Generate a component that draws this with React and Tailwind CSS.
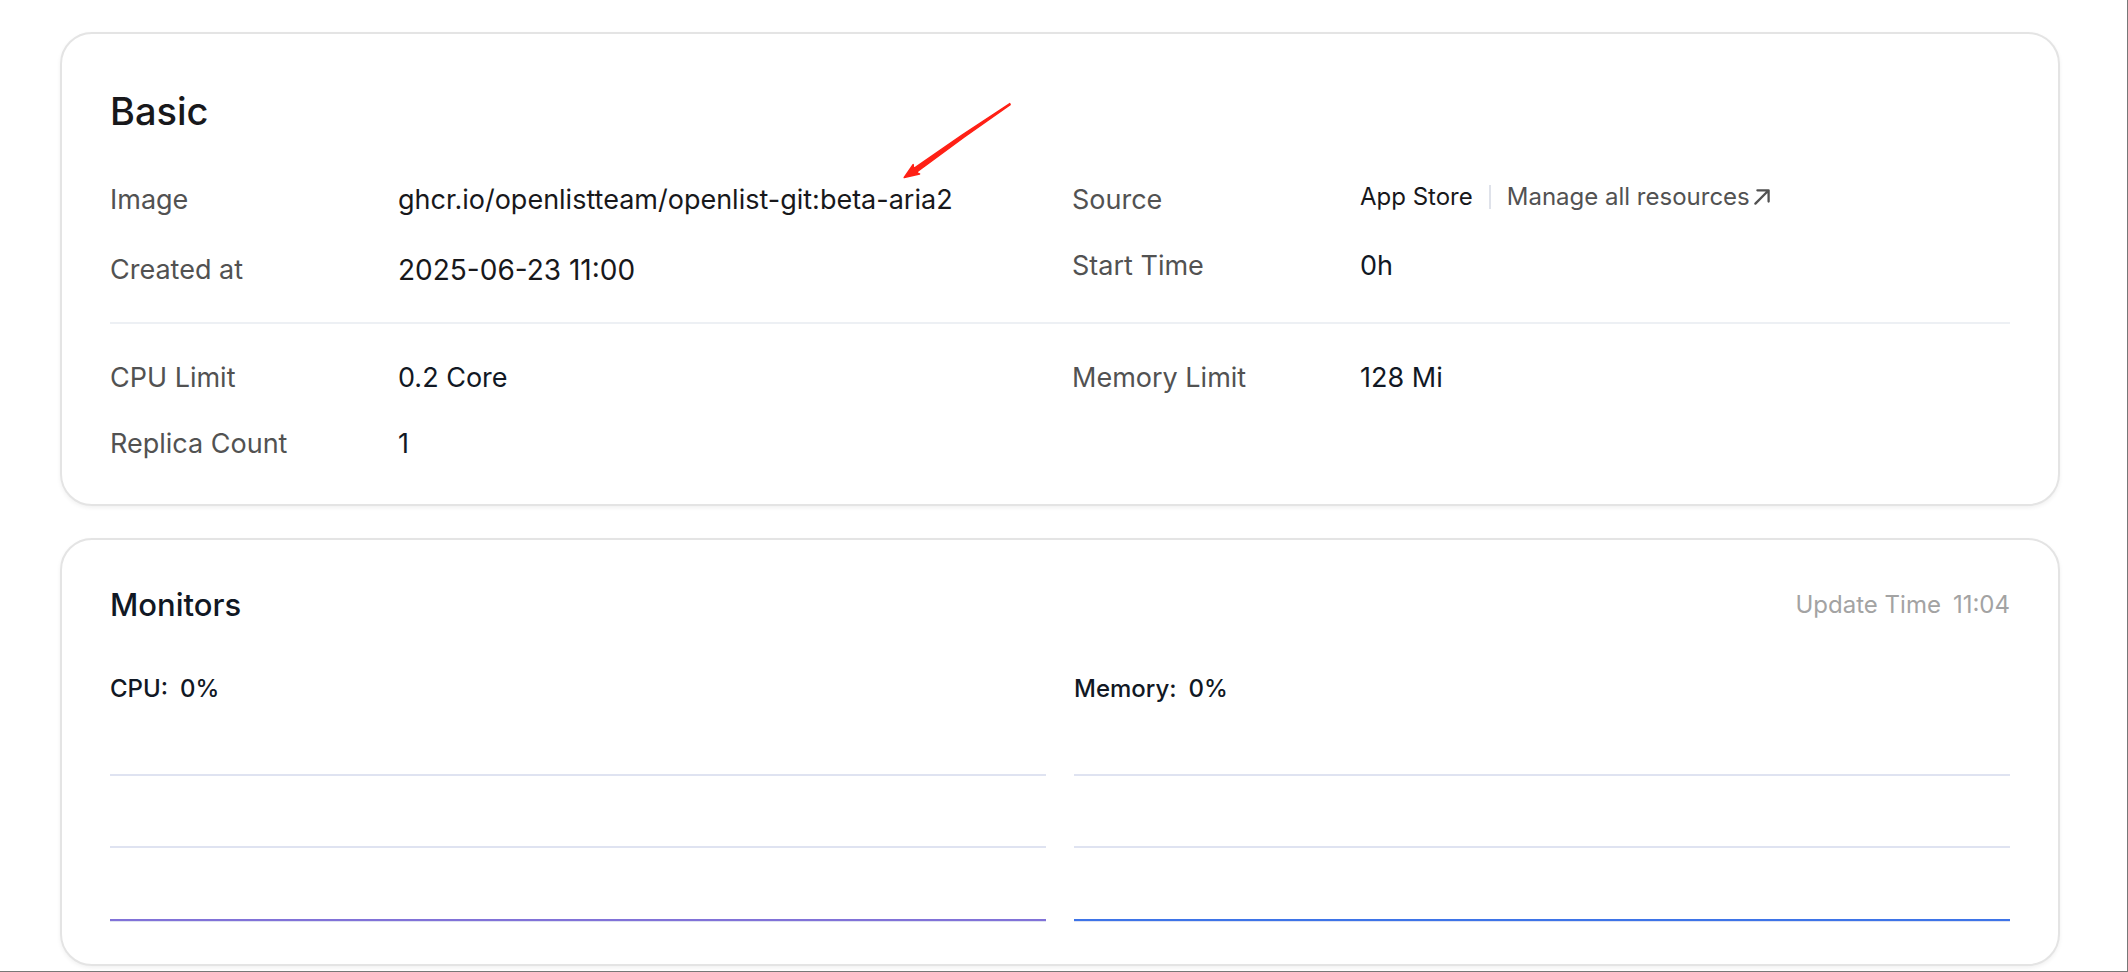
function Row({ label, children, dark }) {
  return (
    <div className="flex items-start">
      <dt className="w-72 shrink-0 text-[#525252]">{label}</dt>
      <dd className={dark ? "text-[#111824]" : "text-[#18181b]"}>{children}</dd>
    </div>
  );
}

function Card({ className, children }) {
  return (
    <section
      className={`rounded-[32px] border-2 border-[#e4e4e4] bg-white px-12 shadow-[0_2px_4px_rgba(0,0,0,0.06)] ${className}`}
    >
      {children}
    </section>
  );
}

function Pointer() {
  return (
    <svg
      className="pointer-events-none absolute -top-[79px] left-[502px]"
      width="114"
      height="82"
      viewBox="0 0 114 82"
      aria-hidden="true"
    >
      <path
        d="M4.2 77.5 L13.2 64.5 L13.6 68.2 L15.4 67.4 L62 35 L109.8 3.6 L110.2 4.8 L64 37.2 L17.8 71.2 L17.2 73.2 L19.6 74 Z"
        fill="#ff2015"
        stroke="#ff2015"
        strokeWidth="1.4"
        strokeLinejoin="round"
      />
    </svg>
  );
}

function ExternalArrow() {
  return (
    <svg width="16" height="16" viewBox="0 0 16 16" fill="none" aria-hidden="true">
      <path
        d="M3.4 1.3H14.6V12.6M14.4 1.5L1.4 14.6"
        stroke="currentColor"
        strokeWidth="2.3"
        strokeLinecap="round"
        strokeLinejoin="round"
      />
    </svg>
  );
}

function Chart({ title, value, color }) {
  return (
    <div>
      <h3 className="flex gap-3 text-[24px] leading-10 font-medium text-[#111824]">
        <span>{title}:</span>
        <span>{value}</span>
      </h3>
      <svg className="mt-[65px] block h-[148px] w-full" role="img" aria-label={`${title} usage`}>
        <rect y="0" width="100%" height="2" fill="#dfe3f1" />
        <rect y="72" width="100%" height="2" fill="#dfe3f1" />
        <rect y="146" width="100%" height="2" fill="#dfe3f1" />
        <rect y="145" width="100%" height="2" fill={color} />
      </svg>
    </div>
  );
}

export default function App() {
  return (
    <main className="flex min-h-screen flex-col gap-8 border-r border-b border-[#777777] bg-white pt-8 pr-[67px] pb-[5px] pl-15 font-['Inter',sans-serif]">
      <Card className="pt-12 pb-[39px]">
        <h1 className="mb-[39px] text-[38px] leading-[58px] font-medium text-[#18181b]">Basic</h1>
        <div className="grid grid-cols-2 gap-x-6 border-b-2 border-[#edf0f4] pb-[31px] text-[27px] leading-[42px]">
          <dl className="flex flex-col gap-6">
            <div className="min-h-[46px]">
              <Row label="Image">
                <span className="relative block whitespace-nowrap">
                  ghcr.io/openlistteam/openlist-git:beta-aria2
                  <Pointer />
                </span>
              </Row>
            </div>
            <Row label="Created at">
              <time className="block text-[28px]">2025-06-23 11:00</time>
            </Row>
          </dl>
          <dl className="flex flex-col gap-6">
            <Row label="Source">
              <span className="flex items-center text-[24px] leading-9">
                App Store
                <span className="mx-4 h-6 w-[2px] bg-[#dfe2ea]" />
                <a href="#resources" className="flex items-center gap-1 text-[#525252]">
                  Manage all resources
                  <ExternalArrow />
                </a>
              </span>
            </Row>
            <Row label="Start Time" dark>0h</Row>
          </dl>
        </div>
        <div className="grid grid-cols-2 gap-x-6 pt-[33px] text-[27px] leading-[42px]">
          <dl className="flex flex-col gap-6">
            <Row label="CPU Limit" dark>0.2 Core</Row>
            <Row label="Replica Count" dark>1</Row>
          </dl>
          <dl>
            <Row label="Memory Limit" dark>128 Mi</Row>
          </dl>
        </div>
      </Card>
      <Card className="pt-[41px] pb-[42px]">
        <header className="flex items-center justify-between leading-[48px]">
          <h2 className="text-[31px] font-medium text-[#111824]">Monitors</h2>
          <p className="flex gap-3 text-[24px] text-[#a3a3a3]">
            <span>Update Time</span>
            <time>11:04</time>
          </p>
        </header>
        <div className="mt-10 grid grid-cols-2 gap-x-7">
          <Chart title="CPU" value="0%" color="#8172d8" />
          <Chart title="Memory" value="0%" color="#3e74e8" />
        </div>
      </Card>
    </main>
  );
}
